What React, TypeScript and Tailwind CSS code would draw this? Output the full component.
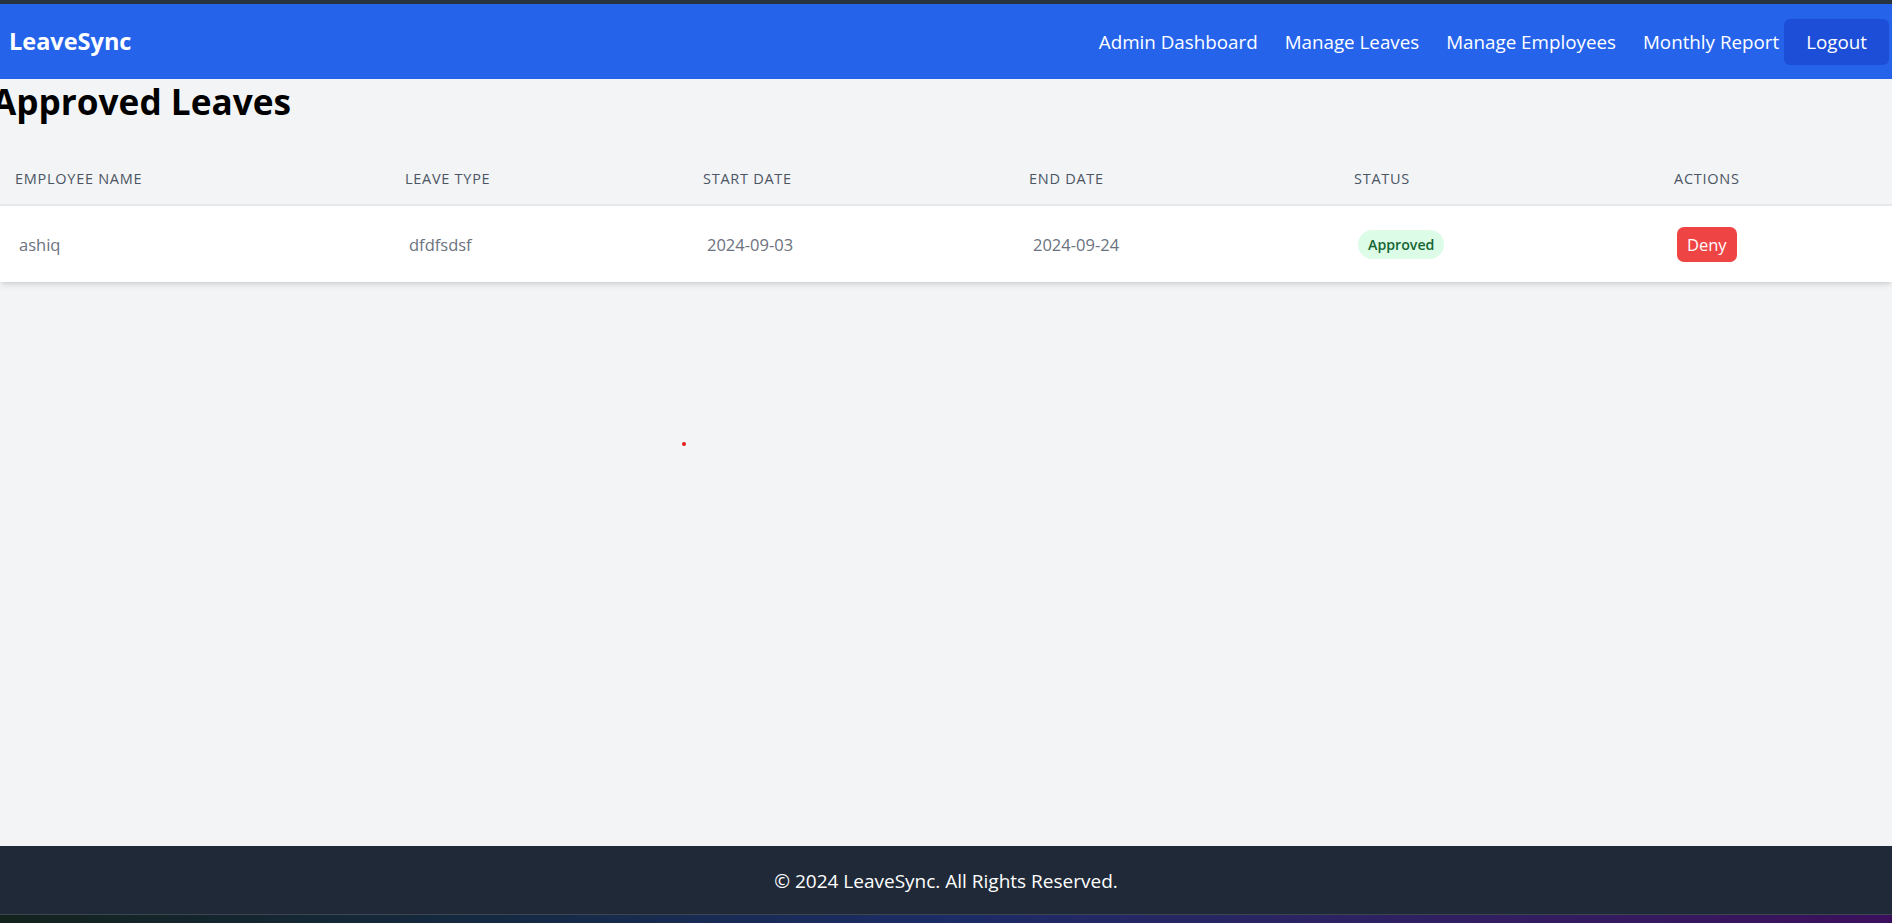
const font = { fontFamily: '"Open Sans", "Noto Sans", sans-serif' }

const leaves = [
  {
    name: 'ashiq',
    type: 'dfdfsdsf',
    start: '2024-09-03',
    end: '2024-09-24',
    status: 'Approved',
  },
]

const cols = 'grid grid-cols-[390px_298px_326px_325px_320px_1fr]'

function Navbar() {
  return (
    <nav className="flex h-[75px] items-center justify-between bg-[#2563eb] pl-[9px] pr-[3px] text-white">
      <span className="text-[23.5px] font-bold leading-[35px]">LeaveSync</span>
      <div className="flex items-center">
        <div className="flex items-center gap-[27px] text-[18.8px] leading-[30px]">
          <a href="#">Admin Dashboard</a>
          <a href="#">Manage Leaves</a>
          <a href="#">Manage Employees</a>
          <a href="#">Monthly Report</a>
        </div>
        <button className="ml-[5px] h-[46px] rounded-[6px] bg-[#1d4ed8] px-[22px] text-[18.8px] leading-[30px] text-white">
          Logout
        </button>
      </div>
    </nav>
  )
}

function LeavesTable() {
  return (
    <div className="shadow-md">
      <div
        className={`${cols} border-b-2 border-[#e5e7eb] bg-[#f3f4f6] text-[14.5px] font-medium uppercase leading-[20px] tracking-wider text-[#4b5563]`}
      >
        {['Employee Name', 'Leave Type', 'Start Date', 'End Date', 'Status', 'Actions'].map(
          (h) => (
            <div key={h} className="py-[15px] pl-[15px]">
              {h}
            </div>
          )
        )}
      </div>
      {leaves.map((l, i) => (
        <div
          key={i}
          className={`${cols} items-center bg-white pb-[20px] pt-[21px] text-[16.5px] leading-[25px] text-[#6b7280]`}
        >
          <div className="pl-[19px]">{l.name}</div>
          <div className="pl-[19px]">{l.type}</div>
          <div className="pl-[19px]">{l.start}</div>
          <div className="pl-[19px]">{l.end}</div>
          <div className="pl-[19px]">
            <span className="inline-flex rounded-full bg-[#dcfce7] px-[10px] py-[2px] text-[14.2px] font-semibold leading-[25px] text-[#166534]">
              {l.status}
            </span>
          </div>
          <div className="pl-[18px]">
            <button className="rounded-[7px] bg-[#ef4444] px-[10px] py-[5px] text-[16.5px] leading-[25px] text-white">
              Deny
            </button>
          </div>
        </div>
      ))}
    </div>
  )
}

export default function App() {
  return (
    <div className="relative flex h-[923px] flex-col overflow-hidden bg-[#f3f4f6]" style={font}>
      <div className="h-[4px] bg-[#28353f]"></div>
      <Navbar />
      <main className="flex-1">
        <h1 className="-ml-[8px] mb-[30px] text-[35.2px] font-bold leading-[45px] text-black">
          Approved Leaves
        </h1>
        <LeavesTable />
      </main>
      <footer className="flex h-[68px] items-center justify-center bg-[#1f2937] pt-[3px] text-[19px] text-white">
        © 2024 LeaveSync. All Rights Reserved.
      </footer>
      <div className="h-[9px] border-t border-[#3d4550] bg-gradient-to-r from-[#13231d] via-[#1b2c66] to-[#3b0f5c]"></div>
      <span className="absolute left-[682px] top-[442px] h-[4px] w-[4px] rounded-full bg-[#e11d1d]"></span>
    </div>
  )
}
